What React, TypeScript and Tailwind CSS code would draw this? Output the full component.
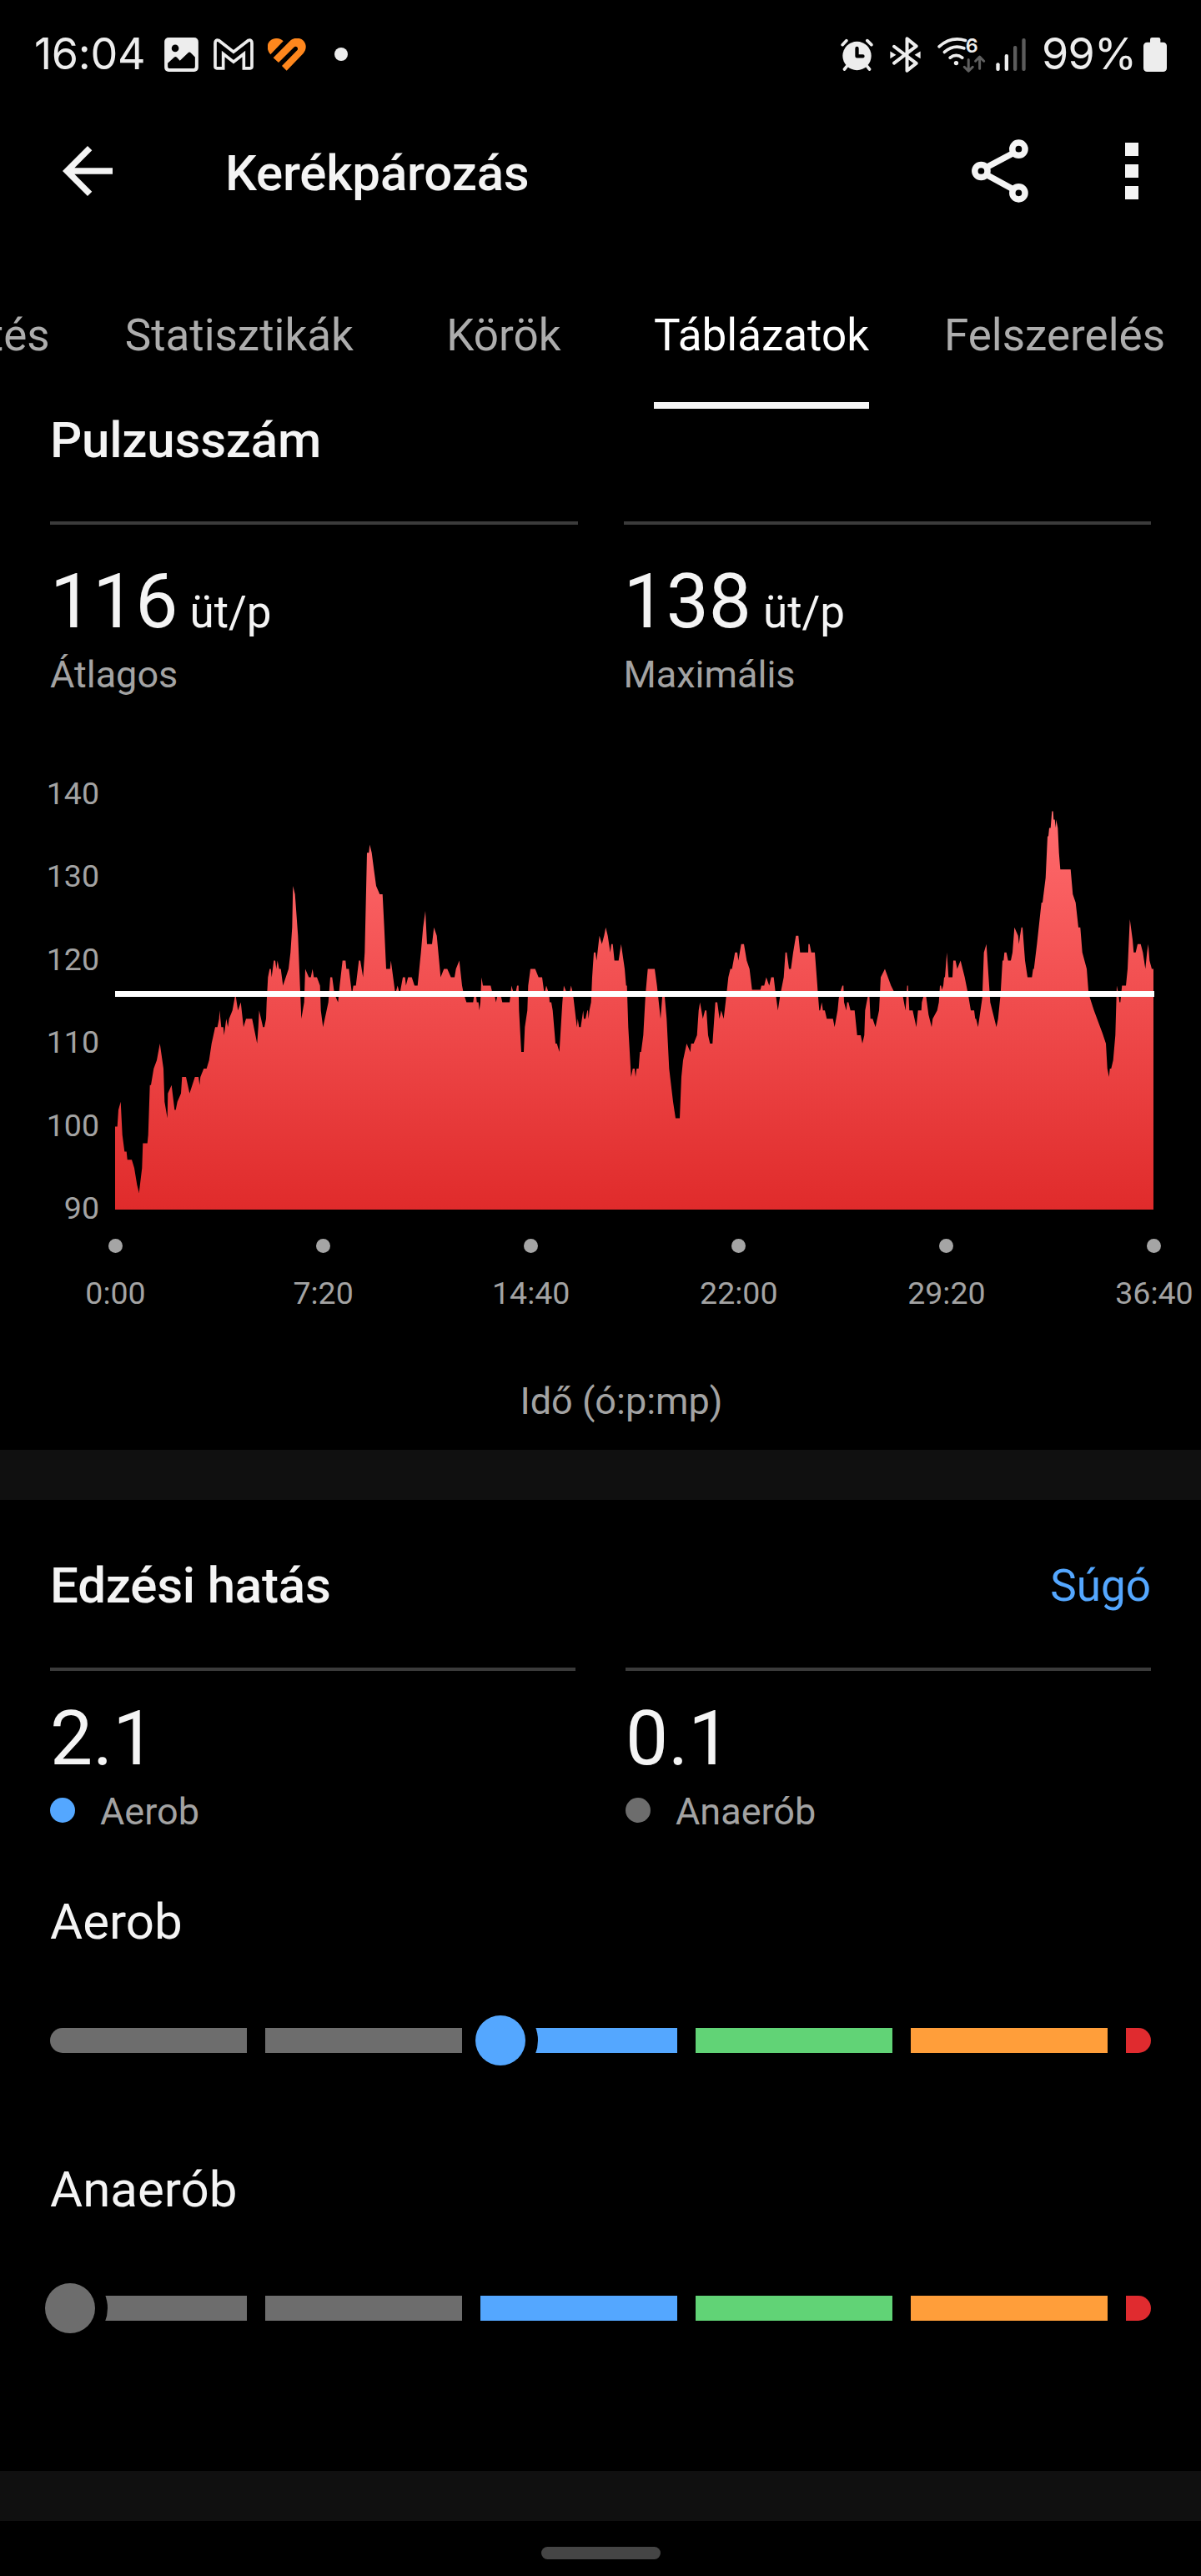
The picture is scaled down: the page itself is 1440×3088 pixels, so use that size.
import React from "react";
import clsx from "clsx";

interface ISegment {
    start: number
    points: number[][]
}

interface IStat {
    value: string
    unit?: string
    label: string
    dot?: string
}

const tabs = ["Áttekintés", "Statisztikák", "Körök", "Táblázatok", "Felszerelés"]
const activeTab = "Táblázatok"

// [x, bpm] samples, x is a third of a plot pixel and counts from the segment start
const heartRate: ISegment[] = [
    {
        start: -114,
        points: [
            [114, 100], [122, 100], [126, 102], [134, 103], [140, 99], [148, 97], [155, 97], [158, 96], [174, 96], [183, 95], [193, 93], [200, 92],
            [211, 95], [214, 98], [230, 98], [233, 99], [239, 105], [243, 105], [253, 107], [264, 108], [275, 110], [288, 107], [292, 103], [302, 101],
            [304, 104], [317, 105], [328, 102], [332, 102], [338, 103], [351, 104], [355, 106], [369, 106], [382, 104], [401, 106], [414, 106], [418, 105],
            [421, 106], [433, 107], [443, 107], [452, 108], [461, 110], [474, 112], [482, 112], [488, 113], [490, 114], [496, 112], [503, 112], [506, 111],
            [514, 113], [520, 112], [524, 113], [536, 114], [547, 116], [556, 114], [566, 115], [576, 112], [585, 113], [607, 113], [625, 110], [629, 112],
            [632, 114], [646, 112], [651, 112], [657, 113], [659, 115], [664, 118], [670, 119], [674, 119], [677, 118], [685, 120], [690, 120], [694, 119],
            [698, 120], [704, 119], [710, 119], [718, 117], [738, 119], [745, 121], [751, 124], [754, 129], [761, 128], [772, 123], [779, 117], [784, 113],
            [794, 115], [798, 119], [811, 118], [818, 118], [824, 119], [829, 118], [840, 118], [851, 117], [854, 114], [862, 112], [881, 115], [888, 118],
            [895, 118], [903, 116], [916, 115], [922, 117], [932, 120], [943, 120], [946, 119], [955, 119], [966, 116], [971, 117], [980, 117], [991, 120],
            [996, 120], [1006, 118], [1012, 121], [1020, 133], [1027, 133], [1030, 134], [1037, 133], [1045, 131], [1053, 129], [1066, 128], [1076, 128],
            [1082, 124], [1089, 119], [1103, 119], [1106, 120], [1122, 116], [1130, 117], [1138, 116], [1149, 118], [1157, 118], [1160, 117], [1168, 118],
            [1181, 118], [1191, 117], [1202, 117], [1214, 121], [1222, 124], [1230, 126], [1236, 122], [1254, 122], [1261, 124], [1271, 123], [1285, 118],
            [1297, 119], [1309, 119], [1322, 118], [1335, 118], [1340, 119], [1352, 120], [1362, 117], [1368, 116],
        ],
    },
    {
        start: 1206,
        points: [
            [58, 115], [82, 115], [86, 116], [92, 116], [95, 115], [101, 115], [104, 114], [108, 115], [112, 118], [117, 117], [145, 117], [152, 116],
            [158, 116], [164, 115], [170, 116], [180, 116], [187, 115], [213, 115], [217, 116], [220, 117], [228, 116], [234, 116], [240, 117], [245, 117],
            [247, 114], [255, 109], [264, 109], [268, 112], [277, 114], [280, 117], [288, 119], [305, 119], [317, 118], [330, 118], [338, 116], [345, 117],
            [355, 116], [357, 115], [363, 115], [368, 114], [378, 110], [383, 110], [392, 109], [403, 115], [408, 117], [420, 116], [428, 116], [434, 117],
            [441, 116], [455, 112], [458, 113], [463, 112], [469, 112], [478, 114], [480, 113], [486, 113], [493, 114], [495, 114], [497, 113], [500, 114],
            [506, 115], [510, 118], [516, 121], [522, 121], [526, 120], [536, 123], [545, 122], [553, 123], [559, 124], [566, 123], [575, 121], [579, 122],
            [584, 122], [590, 120], [605, 120], [614, 122], [627, 119], [632, 117], [635, 117], [640, 112], [650, 106], [656, 107], [663, 107], [666, 106],
            [670, 107], [677, 107], [682, 109], [686, 109], [694, 111], [702, 116], [710, 119], [735, 119], [743, 117], [756, 113], [763, 116], [770, 116],
            [778, 113], [787, 107], [801, 103], [810, 101], [825, 101], [831, 106], [837, 108], [850, 110], [863, 109], [866, 110], [875, 110], [887, 111],
            [893, 114], [898, 115], [908, 113], [916, 114], [921, 114], [927, 111], [934, 110], [943, 110], [953, 115], [960, 115], [968, 113], [974, 114],
            [983, 113], [990, 115], [1000, 118], [1007, 119], [1013, 119], [1024, 121], [1032, 121], [1036, 120], [1046, 122], [1056, 122], [1066, 120],
            [1076, 119], [1085, 116.5], [1115, 116.5], [1119, 117], [1129, 117], [1136, 118], [1147, 117], [1154, 118], [1163, 118], [1170, 116],
            [1178, 114], [1187, 116], [1199, 118], [1205, 121], [1210, 121], [1218, 119], [1225, 119], [1233, 121], [1243, 123], [1252, 123], [1258, 121],
            [1287, 121], [1288, 122], [1292, 122], [1298, 121], [1311, 121], [1320, 117],
        ],
    },
    {
        start: 2466,
        points: [
            [62, 116], [67, 114], [70, 114], [76, 115], [80, 114], [87, 114], [94, 113], [116, 113], [122, 112], [133, 114], [137, 115.5], [145, 116.5],
            [150, 117], [154, 117], [156, 115], [164, 114], [167, 115], [172, 115], [179, 114], [194, 114], [203, 111], [216, 111], [222, 110], [229, 111],
            [232, 114], [243, 116], [247, 116], [251, 113], [259, 113], [269, 112], [282, 114], [288, 118], [303, 119], [325, 117], [340, 116], [366, 116],
            [377, 114], [383, 117], [386, 117], [391, 114], [403, 114], [416, 112], [422, 114], [434, 114], [436, 115], [444, 116], [450, 116],
            [460, 113.5], [471, 112], [475, 113], [491, 114], [497, 115], [501, 117], [505, 117], [508, 116.5], [513, 117], [516, 118], [519, 118],
            [526, 121], [532, 118], [546, 118], [549, 120], [557, 120], [563, 119], [575, 120], [590, 118], [602, 116], [612, 114], [624, 114], [628, 113],
            [631, 113], [638, 112], [653, 115.5], [659, 121], [668, 122], [678, 117], [682, 115], [704, 112], [710, 113], [719, 116], [726, 120],
            [730, 120], [733, 121], [740, 121], [746, 120], [756, 120], [762, 121], [769, 124], [782, 123], [785, 122], [789, 123], [794, 124], [798, 124],
            [807, 120], [816, 118], [832, 118], [836, 119], [839, 119], [850, 122], [866, 127], [870, 127], [881, 130], [888, 135], [891, 135], [894, 136],
            [899, 136], [904, 138], [908, 138], [910, 137], [914, 137], [917, 136], [919, 137], [925, 136], [929, 133], [934, 131], [971, 131], [979, 128],
            [989, 127], [999, 124], [1006, 124], [1013, 121], [1029, 119], [1036, 116], [1055, 114], [1074, 112.3], [1086, 111.2], [1098, 110],
            [1103, 107], [1109, 106], [1112, 107], [1117, 107], [1124, 108], [1132, 111], [1137, 117], [1143, 116], [1147, 115], [1150, 115], [1156, 117],
            [1170, 117], [1176, 119], [1184, 125], [1194, 122.5], [1198, 121], [1205, 121], [1212, 122], [1223, 122], [1231, 121], [1240, 119],
            [1246, 121], [1250, 122], [1255, 120], [1263, 119], [1269, 119],
        ],
    },
]

const StatusBar = () => (
    <div className="flex h-[130px] items-center pl-[41px] pr-[41px] font-['Inter',sans-serif] text-[52px] leading-[60px] text-[#ededed]">
        <span className="w-[156px] tracking-[-0.3px]">16:04</span>
        <svg className="h-[41px] w-[41px]" viewBox="21 14 123 124">
            <rect x="21" y="14" width="123" height="124" rx="15" fill="#ededed" />
            <circle cx="60" cy="53" r="13" fill="#000" />
            <path d="M33 107 56 86Q61 81 66 86L77 98 107 69Q112 65 117 70L132 85V118Q132 126 124 126H41Q33 126 33 118Z" fill="#000" />
        </svg>
        <svg className="ml-[18px] h-[38px] w-[48px]" viewBox="199 17 144 113">
            <path d="M211 124H234V72L271 101 308 72V124H331Q337 124 337 118V34Q337 20 324 24L271 65 218 24Q205 20 205 34V118Q205 124 211 124Z" fill="none" stroke="#ededed" strokeWidth="11" />
        </svg>
        <svg className="ml-[17px] h-[39px] w-[46px]" viewBox="393 17 138 117">
            <g fill="#ff871d">
                <path d="M403 75C388 58 389 36 402 25 417 13 438 15 449 27Z" />
                <path d="M413 87 474 25C488 13 510 13 522 26 534 40 532 58 521 71L461 133 444 116 499 60C506 52 495 41 487 49L432 104Z" />
            </g>
        </svg>
        <span className="ml-[34px] size-4 rounded-full bg-[#ededed]" />

        <svg className="ml-auto h-[39px] w-[39px]" viewBox="23 15 116 117">
            <circle cx="81" cy="78" r="51.5" fill="#ededed" />
            <path d="M29 38 43 23M133 38 118 23M44 116 36 126M118 116 126 126" fill="none" stroke="#ededed" strokeWidth="11" strokeLinecap="round" />
            <path d="M81 51V79H102" fill="none" stroke="#000" strokeWidth="13" strokeLinecap="round" strokeLinejoin="round" />
        </svg>
        <svg className="ml-[20px] h-[43px] w-[37px]" viewBox="202 9 110 128">
            <path d="M217 44 296 104 263 130V16L296 43 217 103" fill="none" stroke="#ededed" strokeWidth="12" strokeLinecap="round" strokeLinejoin="round" />
            <path d="M203 61V87L224 74ZM311 61V87L290 74Z" fill="#ededed" />
        </svg>
        <svg className="ml-[20px] h-[43px] w-[57px] overflow-visible" viewBox="371 10 170 128">
            <circle cx="438" cy="104" r="8" fill="#ededed" />
            <path d="M416 85Q438 68 460 85M396 65Q428 36 466 51M377 45Q420 7 471 23" fill="none" stroke="#ededed" strokeWidth="11" strokeLinecap="round" />
            <text x="472" y="66" fontSize="70" fontWeight="600" fill="#ededed">6</text>
            <path d="M482 92V132M467 118 482 133 497 118M522 124V83M507 97 522 82 537 97" fill="none" stroke="#5f5f5f" strokeWidth="9" strokeLinecap="round" strokeLinejoin="round" />
        </svg>
        <svg className="ml-[13px] h-[39px] w-[36px]" viewBox="581 14 108 117">
            <rect x="582" y="102" width="13" height="29" rx="6" fill="#ededed" />
            <rect x="613" y="71" width="13" height="60" rx="6" fill="#ededed" />
            <rect x="644" y="41" width="13" height="90" rx="6" fill="#5c5c5c" />
            <rect x="675" y="14" width="13" height="117" rx="6" fill="#5c5c5c" />
        </svg>
        <span className="ml-[19px] w-[117px] tracking-[-0.7px]">99%</span>
        <svg className="ml-[5px] h-[41px] w-[28px]" viewBox="1113 10 84 123">
            <rect x="1137" y="10" width="37" height="30" rx="7" fill="#ededed" />
            <rect x="1113" y="27" width="84" height="106" rx="13" fill="#ededed" />
        </svg>
    </div>
)

const AppBar = () => (
    <header className="flex h-[150px] items-center pl-[60px] pr-[75px]">
        <svg className="size-[90px]" viewBox="0 0 24 24" fill="#f4f4f4">
            <path d="M20 11H7.83l5.59-5.59L12 4l-8 8 8 8 1.41-1.41L7.83 13H20v-2z" />
        </svg>
        <h1 className="ml-[120px] pt-[5px] text-[60px] leading-[60px] font-medium tracking-[-0.2px]">Kerékpározás</h1>
        <svg className="ml-auto h-[76px] w-[68px]" viewBox="0 0 68 76" fill="none" stroke="#f4f4f4" strokeWidth="7.5">
            <path d="M50 16.500 17 34M50 60 17 42" />
            <circle cx="11.400" cy="38" r="7.600" />
            <circle cx="56.400" cy="11.700" r="7.600" />
            <circle cx="56.400" cy="64.300" r="7.600" />
        </svg>
        <div className="ml-[116px] flex flex-col gap-[10px]">
            <span className="size-4 bg-[#f4f4f4]" />
            <span className="size-4 bg-[#f4f4f4]" />
            <span className="size-4 bg-[#f4f4f4]" />
        </div>
    </header>
)

const TabBar = () => (
    <nav className="flex h-[210px] justify-end gap-[90px] overflow-hidden pr-[43px]">
        {tabs.map((tab) => (
            <span
                key={tab}
                className={clsx(
                    "min-w-[180px] shrink-0 border-b-8 pt-[92px] text-center text-[53px] leading-[60px]",
                    tab === activeTab ? "border-[#f4f4f4] text-white" : "border-transparent text-[#adadad]"
                )}
            >
                {tab}
            </span>
        ))}
    </nav>
)

const Stat = ({ value, unit, label, dot }: IStat) => (
    <div className={clsx("flex-1 border-t-4 border-[#3b3b3b]", dot ? "pt-[31px]" : "pt-[42px]")}>
        <div className="flex items-baseline">
            <span className="text-[91px] leading-[100px]">{value}</span>
            {unit && <span className="ml-[14px] text-[53px] leading-none">{unit}</span>}
        </div>
        {dot ? (
            <div className="mt-[4.5px] flex items-center gap-[30px]">
                <span className={clsx("size-[30px] rounded-full", dot)} />
                <span className="pt-[3px] text-[45px] leading-[60px] text-[#a3a3a3]">{label}</span>
            </div>
        ) : (
            <div className="mt-2 -mb-px text-[45px] leading-[60px] text-[#a3a3a3]">{label}</div>
        )}
    </div>
)

const LEFT = 138
const BOTTOM = 612
const yOf = (bpm: number) => BOTTOM - (bpm - 90) * 9.946

const HeartRateChart = () => {
    const line = heartRate
        .flatMap(({ start, points }) => points.map(([x, bpm]) => `${(LEFT + (start + x) / 3).toFixed(1)} ${yOf(bpm).toFixed(1)}`))
        .join("L")

    return (
        <svg className="block h-[752px] w-[1440px]" viewBox="0 0 1440 752">
            <defs>
                <linearGradient id="hr" gradientUnits="userSpaceOnUse" x1="0" y1={yOf(138)} x2="0" y2={BOTTOM}>
                    <stop offset="0" stopColor="#ff6b6d" />
                    <stop offset="1" stopColor="#e02b2b" />
                </linearGradient>
            </defs>
            <path d={`M${LEFT} ${BOTTOM}L${line}L1383 ${BOTTOM}Z`} fill="url(#hr)" />
            <rect x={LEFT} y="350" width="1246" height="7" fill="#fff" />
            {[140, 130, 120, 110, 100, 90].map((bpm) => (
                <text key={bpm} x="119" y={yOf(bpm) + 11} textAnchor="end" fontSize="37.500" fill="#a3a3a3">{bpm}</text>
            ))}
            {["0:00", "7:20", "14:40", "22:00", "29:20", "36:40"].map((time, index) => (
                <React.Fragment key={time}>
                    <circle cx={138.5 + index * 249} cy="655.500" r="8.500" fill="#a5a5a5" />
                    <text x={138.5 + index * 249.1} y="725" textAnchor="middle" fontSize="37.500" fill="#a3a3a3">{time}</text>
                </React.Fragment>
            ))}
        </svg>
    )
}

const EffectBar = ({ value, thumb }: { value: number, thumb: string }) => (
    <div className="relative mt-[97.5px] flex h-[30px] gap-[22.5px]">
        <span className="flex-1 rounded-l-full bg-[#6d6d6d]" />
        <span className="flex-1 bg-[#6d6d6d]" />
        <span className="flex-1 bg-[#54a7ff]" />
        <span className="flex-1 bg-[#61d376]" />
        <span className="flex-1 bg-[#ff9e3a]" />
        <span className="w-[30px] rounded-r-full bg-[#e02b2f]" />
        {/* each level is 258px wide, gap included */}
        <span className={clsx("absolute -top-[15px] size-[60px] rounded-full ring-[15px] ring-black", thumb)} style={{ left: value * 258 - 32 }} />
    </div>
)

const App = () => {
    return (
        <div className="flex h-[3088px] w-[1440px] flex-col overflow-hidden bg-black font-['Roboto',sans-serif] text-[#f4f4f4]">
            <StatusBar />
            <AppBar />
            <TabBar />

            <section>
                <div className="px-[60px] pt-[3px]">
                    <h2 className="text-[60px] leading-[69px] font-medium tracking-[-0.2px]">Pulzusszám</h2>
                    <div className="mt-[63px] flex gap-[55px]">
                        <Stat value="116" unit="üt/p" label="Átlagos" />
                        <Stat value="138" unit="üt/p" label="Maximális" />
                    </div>
                </div>
                <HeartRateChart />
                <p className="pt-[60px] pb-[28px] pl-[50px] text-center text-[45px] leading-[60px] text-[#a3a3a3]">Idő (ó:p:mp)</p>
            </section>

            <div className="h-[60px] shrink-0 bg-[#101010]" />

            <section className="px-[60px] pt-[73px] pb-[180px]">
                <div className="flex items-center justify-between leading-[60px]">
                    <h2 className="text-[60px] font-medium tracking-[-0.2px]">Edzési hatás</h2>
                    <a className="text-[53px] text-[#54a7ff]">Súgó</a>
                </div>
                <div className="mt-[68px] flex gap-[60px]">
                    <Stat value="2.1" label="Aerob" dot="bg-[#54a7ff]" />
                    <Stat value="0.1" label="Anaerób" dot="bg-[#6d6d6d]" />
                </div>
                <h3 className="mt-[72px] text-[60px] leading-[60px]">Aerob</h3>
                <EffectBar value={2.1} thumb="bg-[#54a7ff]" />
                <h3 className="mt-[133.5px] text-[60px] leading-[60px]">Anaerób</h3>
                <EffectBar value={0.1} thumb="bg-[#6d6d6d]" />
            </section>

            <div className="h-[60px] shrink-0 bg-[#101010]" />
            <div className="flex justify-center pt-[31px]">
                <span className="h-[15px] w-[143px] rounded-[8px] bg-[#454545]" />
            </div>
        </div>
    )
}

export default App
